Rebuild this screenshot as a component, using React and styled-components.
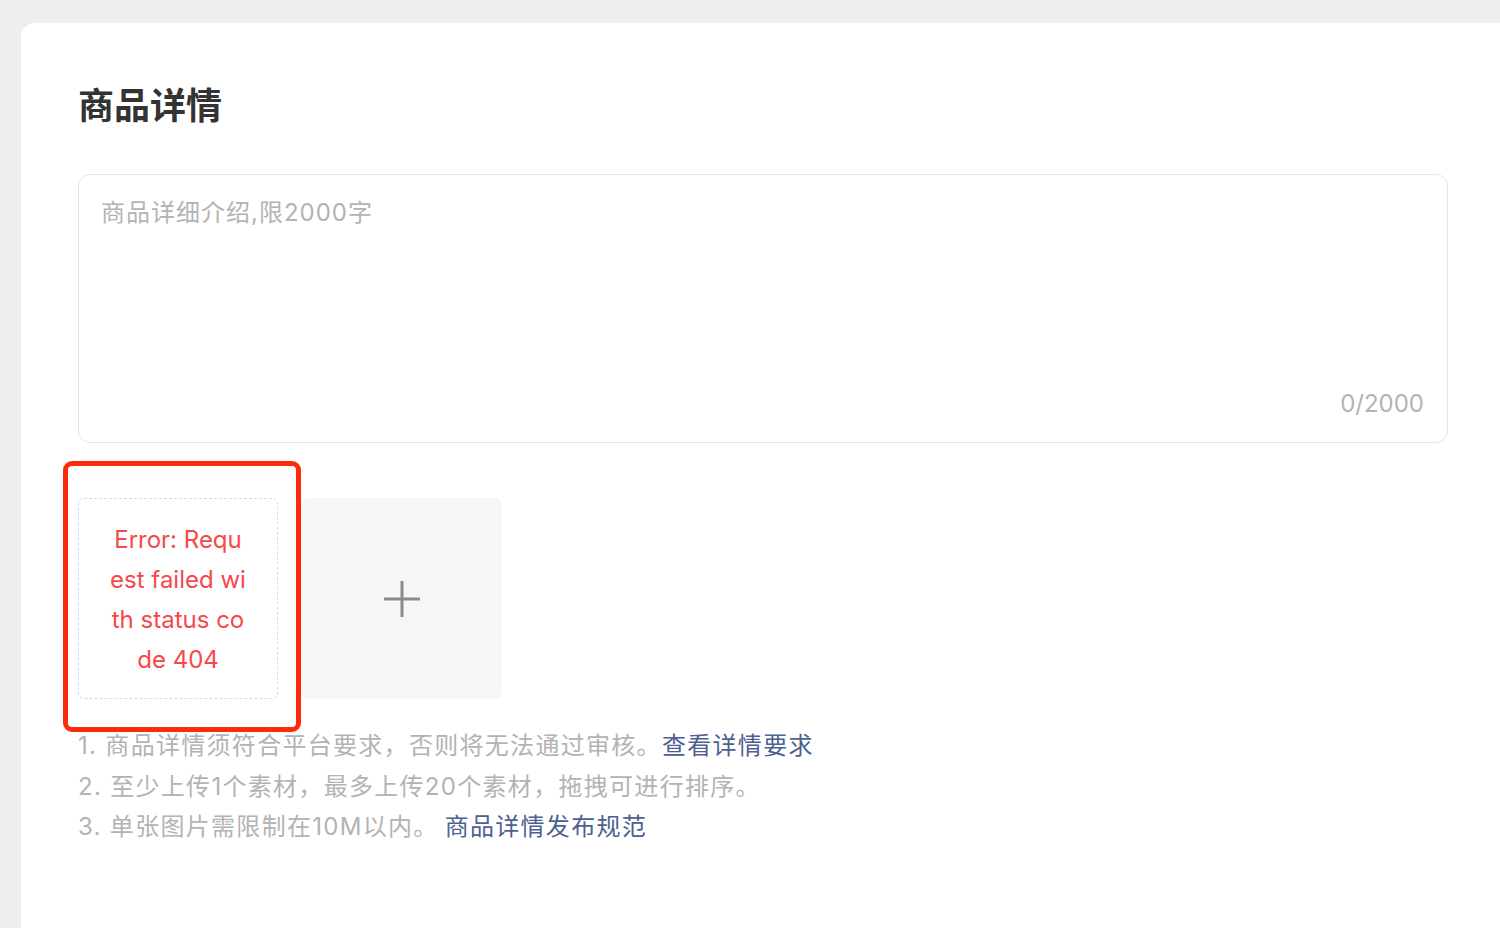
import React from 'react'
import styled, { createGlobalStyle } from 'styled-components'

const GlobalStyle = createGlobalStyle`
  html, body {
    margin: 0;
    padding: 0;
    background: #eeeeee;
    font-family: Inter, "Noto Sans CJK SC", sans-serif;
  }
  * { box-sizing: border-box; }
`

const Page = styled.div`
  width: 1500px;
  height: 928px;
  overflow: hidden;
  padding: 23px 0 0 21px;
`

const Card = styled.div`
  width: 1520px;
  height: 940px;
  background: #fff;
  border-radius: 14px;
  padding: 63px 52px 0 57px;
`

const Title = styled.h2`
  margin: 0;
  font-size: 36px;
  line-height: 40px;
  font-weight: 700;
  color: #333;
`

const TextBox = styled.div`
  width: 1370px;
  height: 269px;
  margin-top: 48px;
  border: 1px solid #e4e4e4;
  border-radius: 12px;
  padding: 22px 23px 22px 22px;
  display: flex;
  flex-direction: column;
  justify-content: space-between;
`

const Placeholder = styled.div`
  font-size: 24px;
  letter-spacing: 1px;
  line-height: 32px;
  color: #b3b3b3;
`

const Counter = styled.div`
  align-self: flex-end;
  font-size: 24px;
  line-height: 32px;
  color: #b3b3b3;
`

const Uploads = styled.div`
  position: relative;
  display: flex;
  gap: 24px;
  margin-top: 55px;
`

const Tile = styled.div`
  width: 200px;
  height: 201px;
  border-radius: 6px;
  display: flex;
  align-items: center;
  justify-content: center;
  ${p => p.$error ? 'border: 1px dashed #dcdcdc; background: #fff;' : 'background: #f5f6f8;'}
`

const ErrorText = styled.div`
  width: 140px;
  padding-top: 3px;
  text-align: center;
  word-break: break-all;
  font-size: 24px;
  line-height: 40px;
  color: #f5484b;
`

const Highlight = styled.div`
  position: absolute;
  left: -15px;
  top: -37px;
  width: 238px;
  height: 271px;
  border: 5px solid #fe2a0c;
  border-radius: 9px;
  pointer-events: none;
`

const Tips = styled.div`
  margin-top: 27px;
  font-size: 24px;
  letter-spacing: 1.3px;
  line-height: 40.5px;
  color: #b3b3b3;
`

const Link = styled.a`
  color: #4d6091;
  text-decoration: none;
  margin-left: ${p => p.$gap || 0}px;
`

function Plus() {
  return (
    <svg width="38" height="38" viewBox="0 0 38 38">
      <path d="M19 1 V37 M1 19 H37" stroke="#8a8a8a" strokeWidth="3" />
    </svg>
  )
}

export default function App() {
  return (
    <>
      <GlobalStyle />
      <Page>
        <Card>
          <Title>商品详情</Title>
          <TextBox>
            <Placeholder>商品详细介绍,限2000字</Placeholder>
            <Counter>0/2000</Counter>
          </TextBox>
          <Uploads>
            <Tile $error>
              <ErrorText>Error: Request failed with status code 404</ErrorText>
            </Tile>
            <Tile>
              <Plus />
            </Tile>
            <Highlight />
          </Uploads>
          <Tips>
            <div>1. 商品详情须符合平台要求，否则将无法通过审核。<Link>查看详情要求</Link></div>
            <div>2. 至少上传1个素材，最多上传20个素材，拖拽可进行排序。</div>
            <div>3. 单张图片需限制在10M以内。<Link $gap={6}>商品详情发布规范</Link></div>
          </Tips>
        </Card>
      </Page>
    </>
  )
}
